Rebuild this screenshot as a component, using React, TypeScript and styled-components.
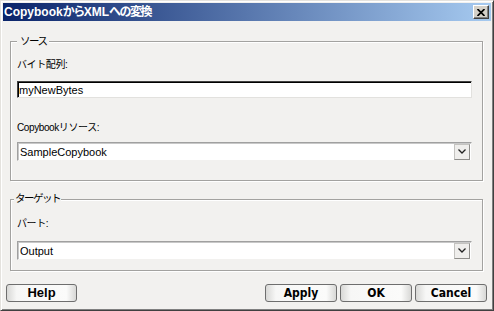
import styled, { createGlobalStyle } from "styled-components";

const GlobalStyle = createGlobalStyle`
    html, body {
        margin: 0;
        padding: 0;
        background: #f2f1ef;
    }
    body {
        font-family: "Liberation Sans", "Noto Sans CJK JP", sans-serif;
    }
    * {
        box-sizing: border-box;
    }
`;

const Frame = styled.div`
    display: flex;
    flex-direction: column;
    width: 494px;
    height: 311px;
    padding: 2px;
    background: #f2f1ef;
    border: 1px solid;
    border-color: #e4e2de #404040 #404040 #e4e2de;
    box-shadow: inset 1px 1px #fff, inset -1px -1px #808080;
`;

const TitleBar = styled.div`
    display: flex;
    align-items: center;
    justify-content: space-between;
    height: 18px;
    padding: 0 2px 0 1px;
    background: linear-gradient(to right, #0a246a, #a6caf0);
`;

const Title = styled.div`
    color: #fff;
    font-size: 12px;
    font-weight: bold;
    line-height: 18px;
    white-space: nowrap;
`;

const TitleCjk = styled.span`
    letter-spacing: -1.5px;
`;

const CloseButton = styled.div`
    display: flex;
    align-items: center;
    justify-content: center;
    width: 16px;
    height: 14px;
    background: #d4d0c8;
    border: 1px solid;
    border-color: #fff #404040 #404040 #fff;
    box-shadow: inset -1px -1px #808080;
`;

const Body = styled.div`
    display: flex;
    flex-direction: column;
    flex: 1;
`;

const GroupBox = styled.div<{ $mt: number; $pb: number }>`
    position: relative;
    display: flex;
    flex-direction: column;
    margin: ${(p) => p.$mt}px 8px 0 7px;
    padding: 0 10px ${(p) => p.$pb}px 6px;
    border: 1px solid #a3a2a0;
    box-shadow: inset 1px 1px #fff, 1px 1px #fff;
`;

const Legend = styled.div<{ $left: number; $pad: number; $top: number }>`
    position: absolute;
    top: ${(p) => p.$top}px;
    left: ${(p) => p.$left}px;
    padding: 0 ${(p) => p.$pad}px;
    background: #f2f1ef;
    color: #000;
    font-family: "Noto Sans CJK JP", sans-serif;
    font-size: 10.5px;
    line-height: 14px;
    letter-spacing: -1.5px;
`;

const Label = styled.div<{ $mt: number }>`
    margin-top: ${(p) => p.$mt}px;
    height: 14px;
    color: #000;
    font-size: 10px;
    line-height: 14px;
    letter-spacing: -0.4px;
    white-space: nowrap;
`;

const TextBox = styled.div<{ $mt: number }>`
    display: flex;
    align-items: center;
    margin-top: ${(p) => p.$mt}px;
    height: 17px;
    padding-left: 1px;
    background: #fff;
    border: 1px solid;
    border-color: #404040 #e2e1de #e2e1de #404040;
    box-shadow: inset 1px 1px #000;
    font-size: 11px;
    color: #000;
`;

const ComboBox = styled.div<{ $mt: number }>`
    display: flex;
    align-items: center;
    justify-content: space-between;
    margin-top: ${(p) => p.$mt}px;
    height: 19px;
    padding: 0 1px 0 2px;
    background: #fff;
    border: 1px solid;
    border-color: #a0a0a0 #f2f1ef #f2f1ef #a0a0a0;
    box-shadow: inset 1px 1px #c8c8c8;
    font-size: 11px;
    color: #000;
`;

const DropButton = styled.div`
    display: flex;
    align-items: center;
    justify-content: center;
    width: 16px;
    height: 16px;
    background: #efeeec;
    border: 1px solid;
    border-color: #c4c3c0 #8e8d8a #8e8d8a #c4c3c0;
`;

const Footer = styled.div`
    display: flex;
    align-items: center;
    margin-top: 13px;
    padding: 0 4px 0 3px;
`;

const ButtonGroup = styled.div`
    display: flex;
    gap: 3px;
    margin-left: auto;
`;

const Button = styled.div<{ $wide?: boolean }>`
    display: flex;
    align-items: center;
    justify-content: center;
    width: ${(p) => (p.$wide ? 71 : 72)}px;
    height: 18px;
    border: 1px solid #6e6e6e;
    border-radius: 3px;
    background: linear-gradient(to right, #d8d8d6, #f7f7f6 14%, #fbfbfa 86%, #d8d8d6);
    color: #000;
    font-family: ${(p) =>
        p.$wide ? `"Liberation Sans", sans-serif` : `"DejaVu Sans Condensed", "DejaVu Sans", sans-serif`};
    font-size: ${(p) => (p.$wide ? 13 : 12)}px;
    font-weight: bold;
    line-height: 16px;
`;

const Chevron = () => (
    <svg width="8" height="5" viewBox="0 0 8 5">
        <polyline points="0.5,0.5 4,4 7.5,0.5" fill="none" stroke="#222" strokeWidth="1.3" />
    </svg>
);

const CloseIcon = () => (
    <svg width="8" height="7" viewBox="0 0 8 7">
        <path d="M0.5 0 L7.5 7 M7.5 0 L0.5 7" stroke="#000" strokeWidth="1.7" />
    </svg>
);

type ComboType = {
    value: string;
    mt: number;
};

const Combo = (props: ComboType) => {
    const { value, mt } = props;
    return (
        <ComboBox $mt={mt}>
            <span>{value}</span>
            <DropButton>
                <Chevron />
            </DropButton>
        </ComboBox>
    );
};

const App = () => {
    return (
        <>
            <GlobalStyle />
            <Frame>
                <TitleBar>
                    <Title>
                        Copybook<TitleCjk>から</TitleCjk>XML<TitleCjk>への変換</TitleCjk>
                    </Title>
                    <CloseButton>
                        <CloseIcon />
                    </CloseButton>
                </TitleBar>
                <Body>
                    <GroupBox $mt={20} $pb={19}>
                        <Legend $left={6} $pad={3} $top={-8}>
                            ソース
                        </Legend>
                        <Label $mt={16}>バイト配列:</Label>
                        <TextBox $mt={9}>myNewBytes</TextBox>
                        <Label $mt={23}>Copybookリソース:</Label>
                        <Combo value="SampleCopybook" mt={7} />
                    </GroupBox>
                    <GroupBox $mt={18} $pb={10}>
                        <Legend $left={3} $pad={1} $top={-9}>
                            ターゲット
                        </Legend>
                        <Label $mt={17}>パート:</Label>
                        <Combo value="Output" mt={10} />
                    </GroupBox>
                    <Footer>
                        <Button $wide>Help</Button>
                        <ButtonGroup>
                            <Button>Apply</Button>
                            <Button>OK</Button>
                            <Button>Cancel</Button>
                        </ButtonGroup>
                    </Footer>
                </Body>
            </Frame>
        </>
    );
};

export default App;
